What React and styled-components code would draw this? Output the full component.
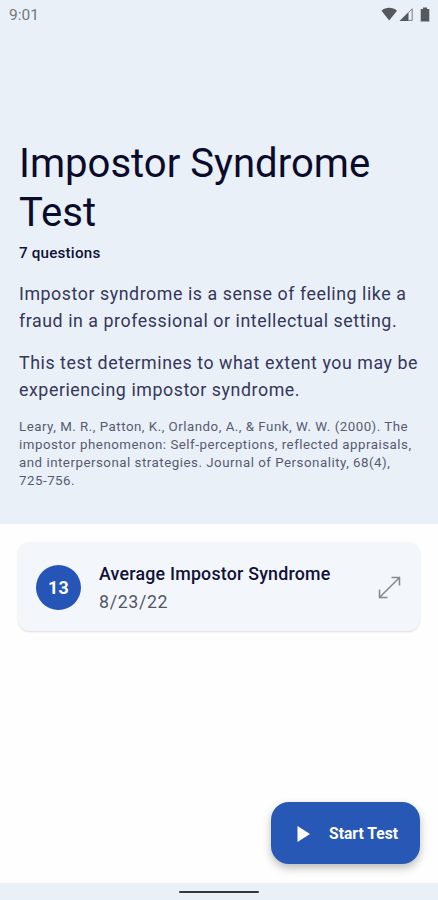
import React from "react";
import styled, { createGlobalStyle } from "styled-components";

const GlobalStyle = createGlobalStyle`
  * {
    box-sizing: border-box;
  }

  body {
    margin: 0;
    font-family: Roboto, sans-serif;
    color: #11113a;
    background-color: #fefefe;
  }
`;

const Screen = styled.div`
  display: flex;
  flex-direction: column;
  width: 438px;
  height: 900px;
  overflow: hidden;
  background-color: #fefefe;
`;

const Header = styled.header`
  height: 524px;
  background-color: #e9f0f8;
`;

const StatusBar = styled.div`
  display: flex;
  justify-content: space-between;
  align-items: center;
  height: 29px;
  padding: 0 8px 0 9px;
  font-size: 15.5px;
  color: #74777c;
`;

const StatusIcons = styled.div`
  display: flex;
  align-items: center;
  margin-top: -1px;
  color: #55585d;

  & svg {
    display: block;
  }

  & svg:last-child {
    margin-left: 6px;
  }
`;

const Intro = styled.div`
  padding: 110px 0 0 19px;
  white-space: nowrap;
`;

const Title = styled.h1`
  margin: 0;
  font-size: 40.1px;
  font-weight: 400;
  line-height: 49px;
  color: #0b0b2b;
`;

const QuestionCount = styled.p`
  margin: 5px 0 0;
  font-size: 15.2px;
  font-weight: 500;
  line-height: 22px;
  letter-spacing: 0.2px;
`;

const Description = styled.p`
  margin: ${(props) => props.$top}px 0 0;
  font-size: 17.8px;
  line-height: 27px;
  letter-spacing: 0.56px;
  color: #35375a;
`;

const Citation = styled.p`
  margin: 15px 0 0;
  font-size: 13.3px;
  line-height: 17.9px;
  letter-spacing: 0.51px;
  color: #585b70;
`;

const Results = styled.main`
  display: flex;
  flex-direction: column;
  flex: 1;
  justify-content: space-between;
  padding: 18px 18px 19px;
`;

const ResultCard = styled.section`
  display: flex;
  align-items: center;
  height: 89px;
  padding: 1px 19px 0 18px;
  border-radius: 12px;
  background-color: #f3f7fb;
  box-shadow: 0 1px 2px rgba(60, 64, 67, 0.18);
`;

const Score = styled.div`
  display: flex;
  justify-content: center;
  align-items: center;
  width: 45px;
  height: 45px;
  padding-top: 1px;
  border-radius: 50%;
  font-size: 17.8px;
  font-weight: 700;
  letter-spacing: 0.4px;
  color: white;
  background-color: #2555b7;
`;

const ResultText = styled.div`
  flex: 1;
  margin-left: 18px;
  padding-top: 1px;
  white-space: nowrap;

  & h2 {
    margin: 0;
    font-size: 17.8px;
    font-weight: 500;
    line-height: 28px;
    letter-spacing: 0.22px;
  }

  & p {
    margin: 0;
    font-size: 17.8px;
    line-height: 28px;
    letter-spacing: 0.65px;
    color: #53566a;
  }
`;

const StartButton = styled.button`
  display: flex;
  align-items: center;
  align-self: flex-end;
  width: 149px;
  height: 62px;
  padding: 2px 0 0 26px;
  border: none;
  border-radius: 18px;
  font: inherit;
  font-size: 15.6px;
  font-weight: 700;
  letter-spacing: 0.03px;
  white-space: nowrap;
  color: white;
  background-color: #2858b5;
  box-shadow: 0 4px 8px rgba(40, 35, 30, 0.3);
  cursor: pointer;

  & svg {
    margin-right: 19px;
  }
`;

const NavigationBar = styled.footer`
  display: flex;
  justify-content: center;
  height: 17px;
  padding-top: 8px;
  background-color: #e9f0f8;
`;

const Handle = styled.div`
  width: 80px;
  height: 2px;
  border-radius: 1px;
  background-color: #34373d;
`;

const WifiIcon = () => (
  <svg width="17" height="14" viewBox="0 0 17 14">
    <path d="M8.2 13.5 L0.5 3.7 C5 -0.1 11.5 -0.1 16 3.7 Z" fill="currentColor" />
  </svg>
);

const SignalIcon = () => (
  <svg width="16" height="15" viewBox="0 0 16 15">
    <path d="M1.5 14 L10.5 5 V14 Z" fill="currentColor" />
    <path d="M10.5 5.5 L14.2 1.8 V13.4 H10.5" fill="none" stroke="currentColor" strokeOpacity="0.75" />
  </svg>
);

const BatteryIcon = () => (
  <svg width="10" height="15" viewBox="0 0 10 15">
    <path d="M3 0.5 H7 V2 H9.3 V14.5 H0.7 V2 H3 Z" fill="currentColor" />
  </svg>
);

const ExpandIcon = () => (
  <svg width="23" height="23" viewBox="0 0 23 23" fill="none" stroke="#85898c" strokeWidth="1.5">
    <path d="M1.7 21.3 L21.3 1.7 M13.5 1.5 H21.5 V9.5 M1.5 13.5 V21.5 H9.5" />
  </svg>
);

const PlayIcon = () => (
  <svg width="13" height="16" viewBox="0 0 13 16">
    <path d="M0.5 0 L13 8 L0.5 16 Z" fill="white" />
  </svg>
);

const App = () => {
  return (
    <Screen>
      <GlobalStyle />
      <Header>
        <StatusBar>
          <span>9:01</span>
          <StatusIcons>
            <WifiIcon />
            <SignalIcon />
            <BatteryIcon />
          </StatusIcons>
        </StatusBar>
        <Intro>
          <Title>
            Impostor Syndrome
            <br />
            Test
          </Title>
          <QuestionCount>7 questions</QuestionCount>
          <Description $top={16}>
            Impostor syndrome is a sense of feeling like a
            <br />
            fraud in a professional or intellectual setting.
          </Description>
          <Description $top={15}>
            This test determines to what extent you may be
            <br />
            experiencing impostor syndrome.
          </Description>
          <Citation>
            Leary, M. R., Patton, K., Orlando, A., &amp; Funk, W. W. (2000). The
            <br />
            impostor phenomenon: Self-perceptions, reflected appraisals,
            <br />
            and interpersonal strategies. Journal of Personality, 68(4),
            <br />
            725-756.
          </Citation>
        </Intro>
      </Header>
      <Results>
        <ResultCard>
          <Score>13</Score>
          <ResultText>
            <h2>Average Impostor Syndrome</h2>
            <p>8/23/22</p>
          </ResultText>
          <ExpandIcon />
        </ResultCard>
        <StartButton>
          <PlayIcon />
          Start Test
        </StartButton>
      </Results>
      <NavigationBar>
        <Handle />
      </NavigationBar>
    </Screen>
  );
};

export default App;
